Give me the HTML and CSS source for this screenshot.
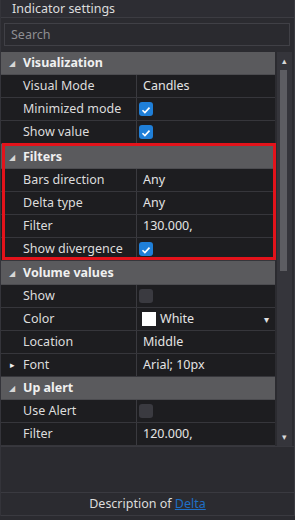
FILE: index.html
```html
<!DOCTYPE html>
<html lang="en">
<head>
  <meta charset="UTF-8" />
  <title>Indicator settings</title>
  <link rel="stylesheet" href="styles.css">
</head>
<body>
  <div class="panel">
    <div class="title">Indicator settings</div>
    <div class="search">Search</div>

    <div class="grid-wrap">
      <div class="grid">
        <div class="group"><span class="tri">&#9698;</span>Visualization</div>
        <div class="row"><div class="name">Visual Mode</div><div class="value">Candles</div></div>
        <div class="row"><div class="name">Minimized mode</div><div class="value"><span class="check on"><svg viewBox="0 0 14 14"><path d="M3.5 7.2l2.4 2.4 4.6-5"/></svg></span></div></div>
        <div class="row"><div class="name">Show value</div><div class="value"><span class="check on"><svg viewBox="0 0 14 14"><path d="M3.5 7.2l2.4 2.4 4.6-5"/></svg></span></div></div>

        <div class="group tall"><span class="tri">&#9698;</span>Filters</div>
        <div class="row"><div class="name">Bars direction</div><div class="value">Any</div></div>
        <div class="row"><div class="name">Delta type</div><div class="value">Any</div></div>
        <div class="row"><div class="name">Filter</div><div class="value">130.000,</div></div>
        <div class="row"><div class="name">Show divergence</div><div class="value"><span class="check on"><svg viewBox="0 0 14 14"><path d="M3.5 7.2l2.4 2.4 4.6-5"/></svg></span></div></div>

        <div class="group mid"><span class="tri">&#9698;</span>Volume values</div>
        <div class="row"><div class="name">Show</div><div class="value"><span class="check"></span></div></div>
        <div class="row"><div class="name">Color</div><div class="value color"><span class="swatch"></span>White<span class="drop">&#9662;</span></div></div>
        <div class="row"><div class="name">Location</div><div class="value">Middle</div></div>
        <div class="row"><div class="name"><span class="expand">&#9656;</span>Font</div><div class="value">Arial; 10px</div></div>

        <div class="group"><span class="tri">&#9698;</span>Up alert</div>
        <div class="row"><div class="name">Use Alert</div><div class="value"><span class="check"></span></div></div>
        <div class="row"><div class="name">Filter</div><div class="value">120.000,</div></div>
      </div>

      <div class="scrollbar">
        <span class="arrow">&#9652;</span>
        <div class="thumb"></div>
        <span class="arrow down">&#9662;</span>
      </div>

      <div class="highlight"></div>
    </div>

    <div class="blank"></div>
    <div class="footer">Description of <a href="#">Delta</a></div>
  </div>
</body>
</html>
```

FILE: styles.css
```css
body {
  margin: 0;
  background: #2b2b30;
  font-family: "Noto Sans", "Open Sans", sans-serif;
  font-size: 12.5px;
  color: #dcdcdc;
}
.panel {
  width: 293px;
  border-right: 1px solid #3a3a40;
  border-left: 1px solid #34343a;
}
.title {
  height: 17px;
  line-height: 17px;
  padding-left: 11px;
  border-bottom: 1px solid #3c3c42;
  background: #2d2d33;
}
.search {
  margin: 5px 4px 0 3px;
  height: 21px;
  line-height: 21px;
  padding-left: 6px;
  border: 1px solid #404046;
  background: #2a2a2f;
  color: #8e8e92;
}
.grid-wrap {
  position: relative;
  display: flex;
  margin-top: 6px;
}
.grid {
  width: 274px;
}
.group {
  height: 22px;
  line-height: 22px;
  background: #5a5a5d;
  border-bottom: 1px solid #4c4c50;
  font-weight: bold;
  color: #f0f0f0;
}
.group.tall {
  height: 24px;
  line-height: 25px;
}
.group.mid {
  height: 23px;
  line-height: 23px;
}
.tri {
  display: inline-block;
  width: 22px;
  padding-left: 8px;
  box-sizing: border-box;
  font-size: 8px;
  font-weight: normal;
  color: #d6d6d6;
  vertical-align: top;
}
.row {
  display: grid;
  grid-template-columns: 136px 1fr;
  height: 22px;
  line-height: 22px;
  background: #1d1d20;
  border-bottom: 1px solid #36363b;
}
.name {
  position: relative;
  padding-left: 22px;
  border-right: 1px solid #3a3a3f;
  white-space: nowrap;
}
.value {
  display: flex;
  align-items: center;
  padding-left: 6px;
  color: #e4e4e4;
}
.expand {
  position: absolute;
  left: 9px;
  font-size: 9px;
  color: #f0f0f0;
}
.check {
  width: 14px;
  height: 14px;
  margin-left: -4px;
  border-radius: 3px;
  background: #3a3a40;
}
.check.on {
  background: #1f7fd8;
}
.check svg {
  width: 14px;
  height: 14px;
  fill: none;
  stroke: #fff;
  stroke-width: 1.6;
}
.color {
  padding-left: 5px;
}
.swatch {
  width: 14px;
  height: 14px;
  margin-right: 4px;
  background: #fff;
}
.drop {
  margin-left: auto;
  margin-right: 6px;
  font-size: 10px;
  color: #e0e0e0;
}
.scrollbar {
  width: 15px;
  margin-left: 2px;
  background: #35353b;
  display: flex;
  flex-direction: column;
  align-items: center;
}
.arrow {
  height: 18px;
  line-height: 18px;
  font-size: 9px;
  color: #d8d8d8;
}
.arrow.down {
  margin-top: auto;
}
.thumb {
  width: 7px;
  height: 201px;
  background: #5d5d62;
  margin-left: -2px;
}
.highlight {
  position: absolute;
  top: 91px;
  left: 1px;
  width: 268px;
  height: 111px;
  border: 3px solid #e3131b;
}
.blank {
  height: 45px;
  border-top: 1px solid #38383e;
  border-bottom: 1px solid #3a3a40;
}
.footer {
  height: 22px;
  line-height: 22px;
  text-align: center;
  border-bottom: 1px solid #3a3a40;
}
.footer a {
  color: #1f6fc5;
}
```
